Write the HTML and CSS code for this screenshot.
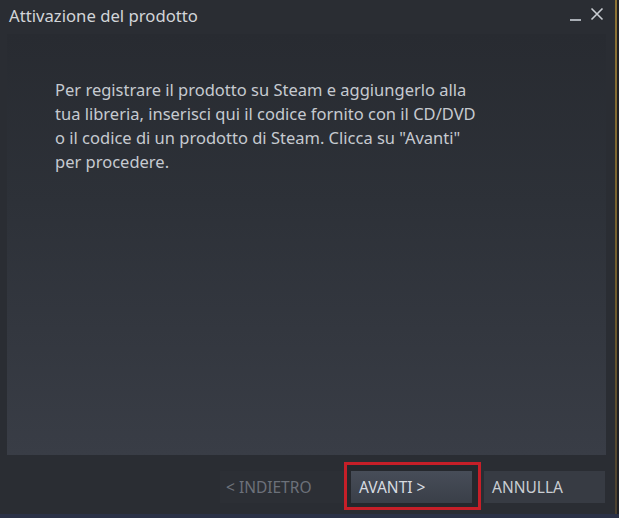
FILE: index.html
```html
<!DOCTYPE html>
<html lang="it">
<head>
<meta charset="utf-8">
<title>Attivazione del prodotto</title>
<link rel="stylesheet" href="styles.css">
</head>
<body>
<div class="screen">
  <div class="window">
    <div class="titlebar">
      <div class="title">Attivazione del prodotto</div>
      <div class="controls">
        <span class="minimize"></span>
        <svg class="close" width="14" height="14" viewBox="0 0 14 14"><path d="M1.5 1.5 L12.5 12.5 M12.5 1.5 L1.5 12.5" stroke="#c9cdd2" stroke-width="1.6" fill="none"/></svg>
      </div>
    </div>
    <div class="panel">
      <p class="message">Per registrare il prodotto su Steam e aggiungerlo alla tua libreria, inserisci qui il codice fornito con il CD/DVD o il codice di un prodotto di Steam. Clicca su "Avanti" per procedere.</p>
    </div>
    <div class="footer">
      <button class="btn btn-disabled">&lt; INDIETRO</button>
      <div class="highlight">
        <button class="btn btn-primary">AVANTI &gt;</button>
      </div>
      <button class="btn btn-secondary">ANNULLA</button>
    </div>
  </div>
  <div class="edge"></div>
</div>
</body>
</html>
```
FILE: styles.css
```css
html, body {
  margin: 0;
  padding: 0;
  background: #202227;
  overflow: hidden;
}
.screen {
  width: 619px;
  height: 518px;
  display: flex;
  background: #1e2026;
  border-bottom: 4px solid #2b3146;
  box-sizing: border-box;
}
.window {
  width: 615px;
  height: 514px;
  background: #2a2d33;
  display: flex;
  flex-direction: column;
  font-family: "Noto Sans", "Open Sans", sans-serif;
}
.edge {
  width: 2px;
  background: linear-gradient(to bottom, #8f7435, #6e5a2c 60%, #4a4030);
}
.titlebar {
  height: 34px;
  display: flex;
  align-items: flex-start;
  justify-content: space-between;
  flex-shrink: 0;
}
.title {
  color: #d2d5d9;
  font-size: 16.7px;
  padding: 4px 0 0 9px;
}
.controls {
  display: flex;
  align-items: flex-start;
  gap: 9px;
  padding: 7px 11px 0 0;
}
.minimize {
  display: block;
  width: 11px;
  height: 2px;
  background: #a9aeb5;
  margin-top: 12px;
}
.close {
  display: block;
}
.panel {
  margin: 0 9px 0 7px;
  height: 421px;
  flex-shrink: 0;
  background: linear-gradient(to bottom, #282b31 0%, #2d3138 40%, #393d46 100%);
  box-sizing: border-box;
  padding: 44px 0 0 48px;
}
.message {
  margin: 0;
  width: 430px;
  color: #c6cad0;
  font-size: 16.5px;
  line-height: 24px;
}
.footer {
  display: flex;
  align-items: flex-start;
  padding: 7px 0 0 220px;
}
.btn {
  font-family: "Noto Sans", "Open Sans", sans-serif;
  font-size: 15.5px;
  border: none;
  height: 32px;
  padding: 0 0 0 8px;
  text-align: left;
  margin: 0;
}
.btn-disabled {
  width: 124px;
  margin-top: 9px;
  background: #2c2f35;
  color: #6c717a;
  padding-left: 6px;
}
.highlight {
  border: 3px solid #c61f28;
  padding: 6px 6px 4px 4px;
  background: #25282d;
}
.btn-primary {
  width: 121px;
  background: linear-gradient(to bottom, #474d58, #3a3f48);
  color: #d7dbe0;
}
.btn-secondary {
  width: 121px;
  margin-top: 9px;
  margin-left: 3px;
  background: #373b43;
  color: #c9cdd2;
}
```
